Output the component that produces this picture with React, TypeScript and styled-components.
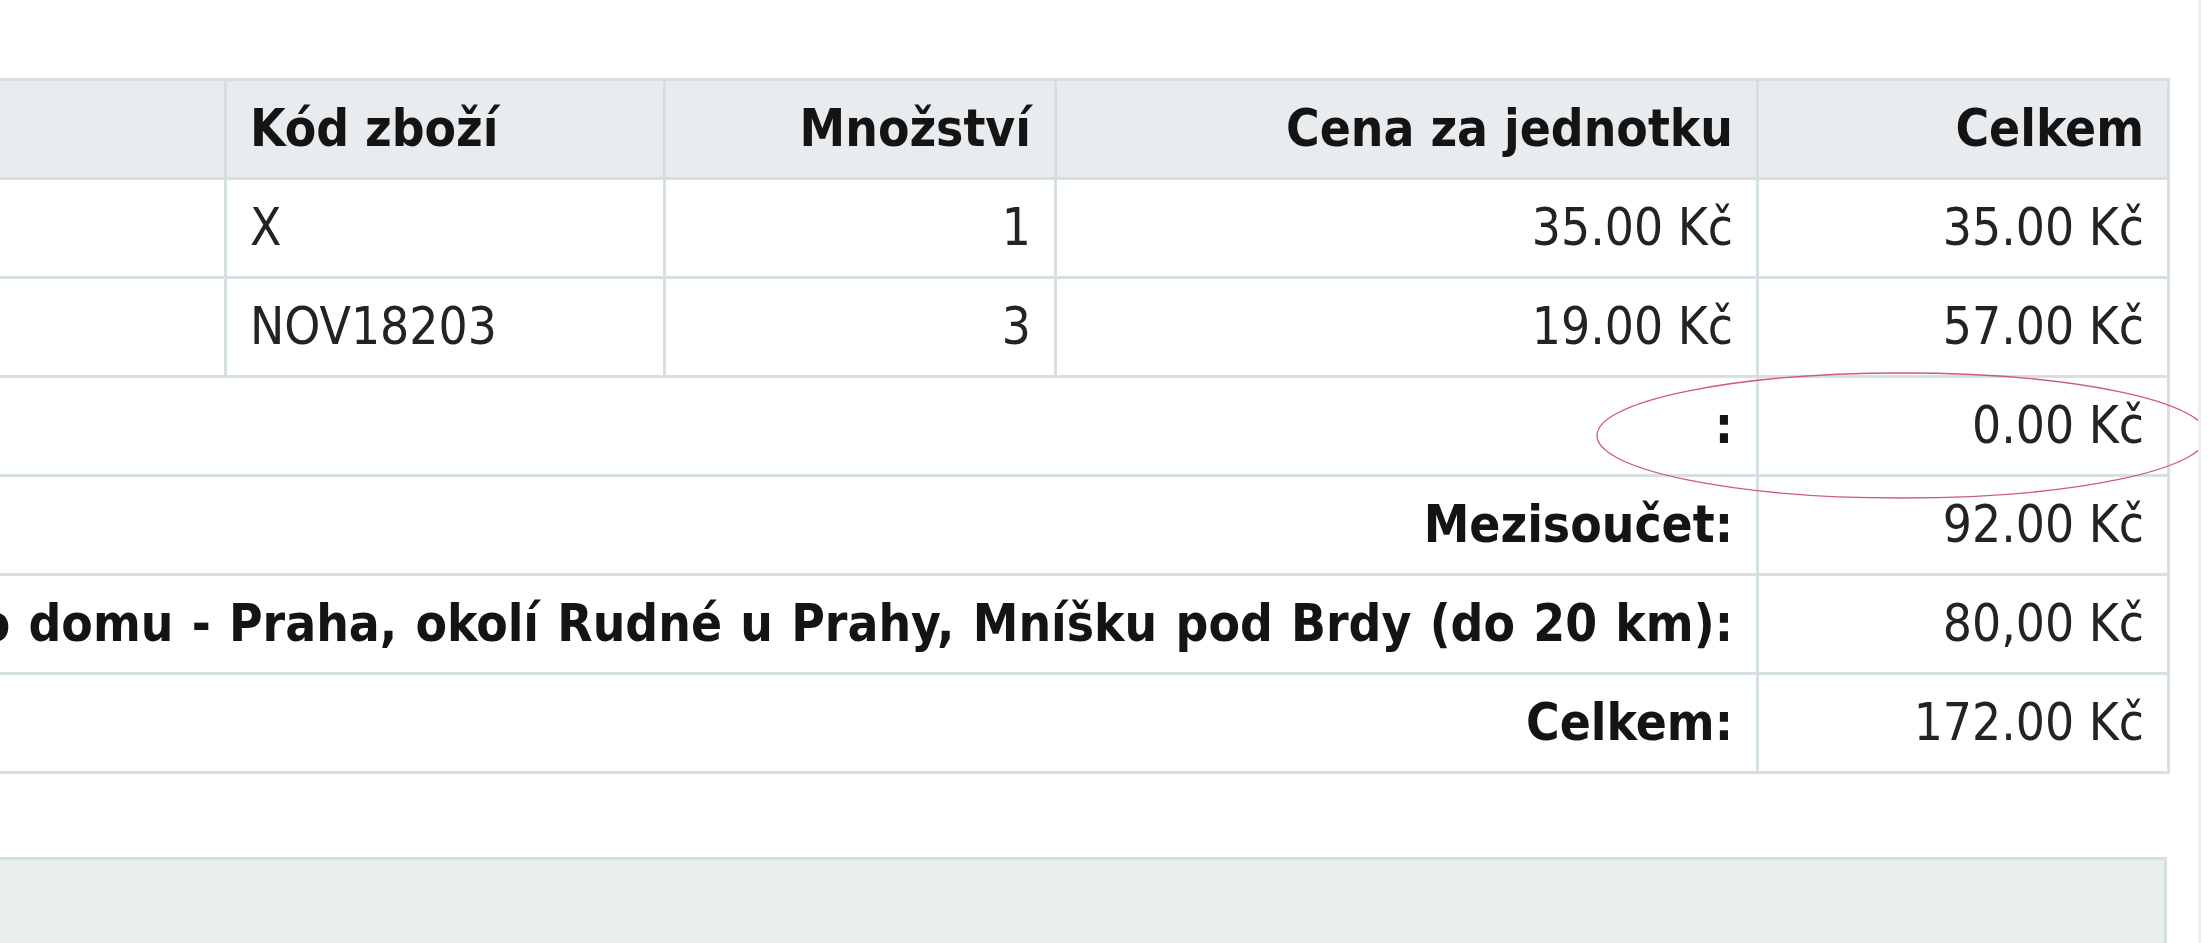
import React from "react";
import styled, { createGlobalStyle } from "styled-components";

const GlobalStyle = createGlobalStyle`
  html, body {
    margin: 0;
    padding: 0;
    background: #ffffff;
    overflow: hidden;
  }
  body {
    font-family: "DejaVu Sans Condensed", "DejaVu Sans", "Liberation Sans", sans-serif;
    font-stretch: condensed;
  }
`;

const Page = styled.div`
  position: relative;
  width: 2201px;
  height: 943px;
  box-sizing: border-box;
  padding-top: 78px;
  border-right: 3px solid #eef1ec;
  overflow: hidden;
`;

const Content = styled.div`
  margin-left: -603px;
  width: 2773px;
  display: flex;
  flex-direction: column;
  gap: 83px;
`;

const CartTable = styled.table`
  width: 2773px;
  table-layout: fixed;
  border-collapse: separate;
  border-spacing: 0;
  border-top: 3px solid #d6e0e3;
  border-left: 3px solid #d6e0e3;
  font-size: 51px;
  color: #232323;
`;

const Col = styled.col<{ $w: number }>`
  width: ${(p) => p.$w}px;
`;

const Cell = styled.td<{ $align?: "left" | "right"; $bold?: boolean; $head?: boolean }>`
  box-sizing: border-box;
  height: 99px;
  padding: 0 23px 0 23px;
  border-right: 3px solid #d6e0e3;
  border-bottom: 3px solid #d6e0e3;
  background: ${(p) => (p.$head ? "#e8ecee" : "#ffffff")};
  text-align: ${(p) => p.$align ?? "left"};
  font-weight: ${(p) => (p.$bold ? 700 : 400)};
  color: ${(p) => (p.$bold ? "#141414" : "#232323")};
  vertical-align: middle;
  white-space: nowrap;
  overflow: visible;
  line-height: 1.15;
`;

const LabelCell = styled(Cell)`
  word-spacing: 2.3px;
`;

const BottomPanel = styled.div`
  height: 200px;
  width: 2767px;
  background: #e8edee;
  border-top: 3px solid #d6e0e3;
  border-right: 3px solid #d6e0e3;
`;

const Annotation = styled.svg`
  position: absolute;
  left: 1595px;
  top: 371px;
  overflow: visible;
  pointer-events: none;
`;

type Item = { code: string; qty: string; unit: string; total: string };

const items: Item[] = [
  { code: "X", qty: "1", unit: "35.00 Kč", total: "35.00 Kč" },
  { code: "NOV18203", qty: "3", unit: "19.00 Kč", total: "57.00 Kč" },
];

const totals = [
  { label: ":", value: "0.00 Kč" },
  { label: "Mezisoučet:", value: "92.00 Kč" },
  {
    label: "Rozvoz až do domu - Praha, okolí Rudné u Prahy, Mníšku pod Brdy (do 20 km):",
    value: "80,00 Kč",
  },
  { label: "Celkem:", value: "172.00 Kč" },
];

export default function App() {
  return (
    <>
      <GlobalStyle />
      <Page>
        <Content>
          <CartTable>
            <colgroup>
              <Col $w={827} />
              <Col $w={439} />
              <Col $w={391} />
              <Col $w={702} />
              <Col $w={411} />
            </colgroup>
            <thead>
              <tr>
                <Cell as="th" $head $bold />
                <Cell as="th" $head $bold>Kód zboží</Cell>
                <Cell as="th" $head $bold $align="right">Množství</Cell>
                <Cell as="th" $head $bold $align="right">Cena za jednotku</Cell>
                <Cell as="th" $head $bold $align="right">Celkem</Cell>
              </tr>
            </thead>
            <tbody>
              {items.map((it) => (
                <tr key={it.code}>
                  <Cell />
                  <Cell>{it.code}</Cell>
                  <Cell $align="right">{it.qty}</Cell>
                  <Cell $align="right">{it.unit}</Cell>
                  <Cell $align="right">{it.total}</Cell>
                </tr>
              ))}
              {totals.map((t) => (
                <tr key={t.label}>
                  <LabelCell colSpan={4} $align="right" $bold>
                    {t.label}
                  </LabelCell>
                  <Cell $align="right">{t.value}</Cell>
                </tr>
              ))}
            </tbody>
          </CartTable>
          <BottomPanel />
        </Content>
        <Annotation width="614" height="130" viewBox="0 0 614 130">
          <ellipse cx="307" cy="64.5" rx="305" ry="62.5" fill="none" stroke="#cf5a78" strokeWidth="1.3" />
        </Annotation>
      </Page>
    </>
  );
}
